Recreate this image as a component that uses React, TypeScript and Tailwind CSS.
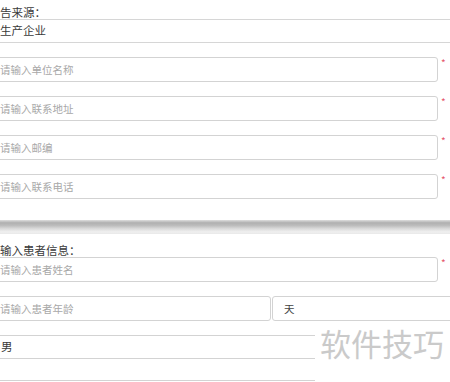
import React from "react";

const font = { fontFamily: '"Noto Sans CJK SC", "Noto Sans", sans-serif' };

function Field({ placeholder, required = true }: { placeholder: string; required?: boolean }) {
  return (
    <div className="flex items-start ml-[-10px]">
      <div className="w-[448px] h-[25px] border border-[#d3d3d3] rounded-[3px] pl-[9px] flex items-center text-[10.5px] text-[#a8a8a8] shrink-0">
        {placeholder}
      </div>
      {required && <span className="ml-[3px] mt-[1px] text-[10px] leading-[10px] text-[#e5566a]">*</span>}
    </div>
  );
}

export default function App() {
  return (
    <div className="w-[450px] h-[382px] overflow-hidden bg-white relative" style={font}>
      <div className="h-[19px] pt-[5px] text-[11.5px] leading-[14px] text-[#3a3a3a]">告来源：</div>
      <div className="ml-[-10px] w-[480px] h-[24px] border-y border-[#d6d6d6] pl-[10px] flex items-center text-[11.5px] text-[#3a3a3a]">
        生产企业
      </div>
      <div className="flex flex-col gap-[14px] mt-[14px]">
        <Field placeholder="请输入单位名称" />
        <Field placeholder="请输入联系地址" />
        <Field placeholder="请输入邮编" />
        <Field placeholder="请输入联系电话" />
      </div>
      <div className="mt-[21px] h-[14px] w-full bg-[linear-gradient(to_bottom,#dedede_0%,#b0b0b0_20%,#bdbdbd_40%,#dadada_62%,#f0f0f0_85%,#e8e8e8_100%)]" />
      <div className="h-[23px] pt-[9px] text-[11.5px] leading-[14px] text-[#3a3a3a]">输入患者信息：</div>
      <Field placeholder="请输入患者姓名" />
      <div className="flex mt-[14px] ml-[-10px] items-start">
        <div className="w-[281px] h-[25px] border border-[#d3d3d3] rounded-[3px] pl-[9px] flex items-center text-[10.5px] text-[#a8a8a8] shrink-0">
          请输入患者年龄
        </div>
        <div className="ml-[1px] w-[300px] h-[25px] border border-[#d3d3d3] rounded-[3px] pl-[11px] flex items-center text-[10.5px] text-[#444] shrink-0">
          天
        </div>
      </div>
      <div className="mt-[14px] ml-[-10px] w-[480px] h-[24px] border border-[#d3d3d3] pl-[10px] flex items-center text-[11.5px] text-[#3a3a3a]">
        男
      </div>
      <div className="mt-[21px] ml-[-10px] w-[480px] h-[24px] border border-[#d3d3d3]" />
      <div className="absolute left-[315px] top-[322px] w-[135px] h-[60px] bg-white">
        <div className="pl-[5px] pt-[4px] text-[31px] leading-[34px] tracking-[0px] text-[#cacaca]">软件技巧</div>
      </div>
    </div>
  );
}
